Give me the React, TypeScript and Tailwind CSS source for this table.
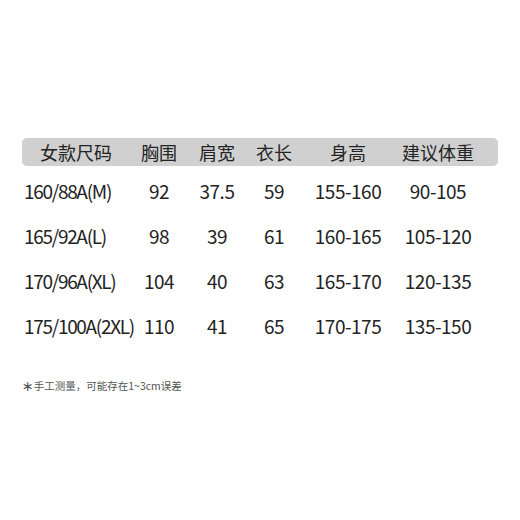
const COLS = "grid grid-cols-[108px_58px_58px_56px_92px_88px]";

const HEAD = ["女款尺码", "胸围", "肩宽", "衣长", "身高", "建议体重"];

const ROWS = [
  ["160/88A(M)", "92", "37.5", "59", "155-160", "90-105"],
  ["165/92A(L)", "98", "39", "61", "160-165", "105-120"],
  ["170/96A(XL)", "104", "40", "63", "165-170", "120-135"],
  ["175/100A(2XL)", "110", "41", "65", "170-175", "135-150"],
];

export default function App() {
  return (
    <div className="w-[520px] h-[520px] bg-white text-[#232323] font-['Noto_Sans_CJK_SC',sans-serif]">
      <div className="pt-[138px] pl-[22px]">
        <div className={`${COLS} w-[476px] h-[28px] items-center rounded-[5px] bg-[#d0d0d0] text-[18px] leading-none`}>
          {HEAD.map((h) => (
            <div key={h} className="text-center">
              {h}
            </div>
          ))}
        </div>
        <div className="pt-[2px]">
          {ROWS.map((r) => (
            <div key={r[0]} className={`${COLS} h-[45px] items-center text-[19px] leading-none`}>
              {r.map((c, i) => (
                <div
                  key={i}
                  className={
                    i === 0
                      ? "pl-[2px] whitespace-nowrap tracking-[-1.3px]"
                      : "text-center whitespace-nowrap tracking-[-0.5px]"
                  }
                >
                  {c}
                </div>
              ))}
            </div>
          ))}
        </div>
        <p className="mt-[28px] flex items-center text-[10.5px] leading-[20px] text-[#555]">
          <span className="text-[14px] leading-none font-['DejaVu_Sans',sans-serif]">∗</span>
          手工测量，可能存在1~3cm误差
        </p>
      </div>
    </div>
  );
}
